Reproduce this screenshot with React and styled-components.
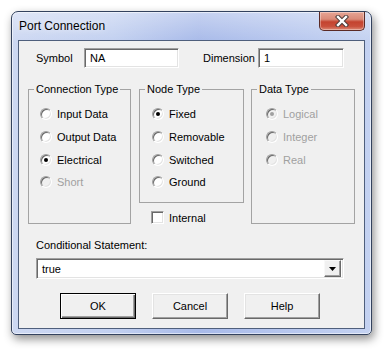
import React from 'react'
import styled, { createGlobalStyle } from 'styled-components'

const GlobalStyle = createGlobalStyle`
  html, body {
    margin: 0;
    padding: 0;
    background: #fff;
  }
  body {
    font-family: "Liberation Sans", Arial, sans-serif;
    font-size: 11px;
    color: #000;
  }
  * {
    box-sizing: border-box;
  }
`

const Desktop = styled.div`
  width: 385px;
  height: 351px;
  padding: 11px 0 0 11px;
`

const Window = styled.div`
  width: 361px;
  height: 324px;
  display: flex;
  flex-direction: column;
  border: 1px solid #33425e;
  border-radius: 7px 7px 5px 5px;
  padding: 0 6px 5px;
  background:
    linear-gradient(180deg, rgba(255, 255, 255, 0.35) 0%, rgba(255, 255, 255, 0) 30px),
    linear-gradient(90deg, #cdd8f2 0%, #c2d0f0 28%, #a8bae9 52%, #b6c6ee 76%, #c4d2f1 100%);
  box-shadow: 2px 4px 10px rgba(0, 0, 0, 0.45), inset 0 0 0 1px rgba(255, 255, 255, 0.55);
`

const TitleBar = styled.div`
  height: 28px;
  display: flex;
  align-items: center;
  padding-left: 1px;
`

const Title = styled.span`
  flex: 1;
  font-size: 12px;
  color: #000;
  text-shadow: 0 0 6px rgba(255, 255, 255, 0.9);
`

const CloseButton = styled.div`
  align-self: flex-start;
  width: 46px;
  height: 19px;
  border: 1px solid #5b2a25;
  border-top: none;
  border-radius: 0 0 5px 5px;
  background: linear-gradient(180deg, #e6a494 0%, #d98a78 40%, #c4432f 55%, #c9503c 80%, #dd8a76 100%);
  box-shadow: inset 0 0 0 1px rgba(255, 255, 255, 0.35);
  display: flex;
  align-items: center;
  justify-content: center;
`

const Client = styled.div`
  flex: 1;
  background: #f0f0f0;
  border: 1px solid #4f5f7c;
  display: flex;
  flex-direction: column;
  padding-top: 7px;
`

const FieldRow = styled.div`
  display: flex;
  align-items: center;
  height: 20px;
  padding-left: 17px;
`

const FieldLabel = styled.span`
  width: ${p => p.$w}px;
  margin-left: ${p => p.$ml || 0}px;
`

const Sunken = styled.div`
  height: ${p => p.$h || 20}px;
  width: ${p => p.$w}px;
  background: #fff;
  border: 1px solid;
  border-color: #a0a0a0 #fff #fff #a0a0a0;
  box-shadow: inset 1px 1px 0 #696969, inset -1px -1px 0 #e3e3e3;
  display: flex;
  align-items: center;
  padding-left: 5px;
`

const GroupsRow = styled.div`
  display: flex;
  align-items: flex-start;
  margin-top: 15px;
  padding-left: 9px;
`

const Column = styled.div`
  display: flex;
  flex-direction: column;
  margin-left: ${p => p.$ml || 0}px;
`

const Group = styled.fieldset`
  margin: 0;
  padding: 0;
  width: ${p => p.$w}px;
  height: ${p => p.$h}px;
  border: 1px solid #a3a3a3;
  min-inline-size: 0;
`

const Legend = styled.legend`
  margin-left: 5px;
  padding: 0 2px;
  line-height: 13px;
  white-space: nowrap;
  color: ${p => (p.$disabled ? '#a0a0a0' : '#000')};
`

const Options = styled.div`
  padding: 7px 0 0 ${p => p.$inset}px;
`

const OptionRow = styled.div`
  display: flex;
  align-items: center;
  height: 22.7px;
  white-space: nowrap;
  color: ${p => (p.$disabled ? '#a0a0a0' : '#000')};
`

const RadioDot = styled.span`
  flex: none;
  width: 12px;
  height: 12px;
  border-radius: 50%;
  border: 1px solid;
  border-color: #a0a0a0 #fff #fff #a0a0a0;
  background: ${p => (p.$disabled ? '#f0f0f0' : '#fff')};
  box-shadow: inset 1px 1px 0 #696969, inset -1px -1px 0 #e3e3e3;
  display: flex;
  align-items: center;
  justify-content: center;
  margin-right: 5px;

  &::after {
    content: '';
    width: 4px;
    height: 4px;
    border-radius: 50%;
    background: ${p => (p.$disabled ? '#a0a0a0' : '#000')};
    display: ${p => (p.$checked ? 'block' : 'none')};
  }
`

const CheckRow = styled.div`
  display: flex;
  align-items: center;
  height: 13px;
  margin-top: 8px;
  padding-left: 12px;
`

const CheckBox = styled.span`
  flex: none;
  width: 13px;
  height: 13px;
  border: 1px solid;
  border-color: #a0a0a0 #fff #fff #a0a0a0;
  background: #fff;
  box-shadow: inset 1px 1px 0 #696969, inset -1px -1px 0 #e3e3e3;
  margin-right: 5px;
`

const SectionLabel = styled.div`
  margin-top: 15px;
  padding-left: 17px;
  line-height: 13px;
`

const Combo = styled(Sunken)`
  margin: 6px 0 0 17px;
  justify-content: space-between;
  padding-right: 2px;
`

const DropButton = styled.span`
  width: 17px;
  height: 17px;
  background: #f0f0f0;
  border: 1px solid;
  border-color: #f8f8f8 #696969 #696969 #f8f8f8;
  box-shadow: inset -1px -1px 0 #a0a0a0;
  display: flex;
  align-items: center;
  justify-content: center;
`

const ButtonRow = styled.div`
  display: flex;
  gap: 16px;
  margin-top: 14px;
  padding-left: 41px;
`

const PushButton = styled.div`
  width: 76px;
  height: 26px;
  background: #f0f0f0;
  border: 1px solid;
  border-color: ${p => (p.$default ? '#000' : '#fff #696969 #696969 #fff')};
  box-shadow: ${p =>
    p.$default
      ? 'inset 1px 1px 0 #fff, inset -1px -1px 0 #696969, inset -2px -2px 0 #a0a0a0'
      : 'inset -1px -1px 0 #a0a0a0, inset 1px 1px 0 #e3e3e3'};
  display: flex;
  align-items: center;
  justify-content: center;
`

const Radio = ({ label, checked, disabled }) => (
  <OptionRow $disabled={disabled}>
    <RadioDot $checked={checked} $disabled={disabled} />
    {label}
  </OptionRow>
)

const CloseGlyph = () => (
  <svg width="14" height="12" viewBox="0 0 14 12">
    <path d="M3 2 L11 10 M11 2 L3 10" stroke="#4a3a38" strokeWidth="4.4" strokeLinecap="square" />
    <path d="M3 2 L11 10 M11 2 L3 10" stroke="#fff" strokeWidth="2.4" strokeLinecap="square" />
  </svg>
)

export default function App() {
  return (
    <Desktop>
      <GlobalStyle />
      <Window>
        <TitleBar>
          <Title>Port Connection</Title>
          <CloseButton>
            <CloseGlyph />
          </CloseButton>
        </TitleBar>
        <Client>
          <FieldRow>
            <FieldLabel $w={48}>Symbol</FieldLabel>
            <Sunken $w={95}>NA</Sunken>
            <FieldLabel $w={55} $ml={24}>Dimension</FieldLabel>
            <Sunken $w={86}>1</Sunken>
          </FieldRow>

          <GroupsRow>
            <Group $w={103} $h={141}>
              <Legend>Connection Type</Legend>
              <Options $inset={11}>
                <Radio label="Input Data" />
                <Radio label="Output Data" />
                <Radio label="Electrical" checked />
                <Radio label="Short" disabled />
              </Options>
            </Group>
            <Column $ml={8}>
              <Group $w={105} $h={120}>
                <Legend>Node Type</Legend>
                <Options $inset={12}>
                  <Radio label="Fixed" checked />
                  <Radio label="Removable" />
                  <Radio label="Switched" />
                  <Radio label="Ground" />
                </Options>
              </Group>
              <CheckRow>
                <CheckBox />
                Internal
              </CheckRow>
            </Column>
            <Column $ml={7}>
              <Group $w={104} $h={141}>
                <Legend>Data Type</Legend>
                <Options $inset={14}>
                  <Radio label="Logical" checked disabled />
                  <Radio label="Integer" disabled />
                  <Radio label="Real" disabled />
                </Options>
              </Group>
            </Column>
          </GroupsRow>

          <SectionLabel>Conditional Statement:</SectionLabel>
          <Combo $w={308} $h={21}>
            true
            <DropButton>
              <svg width="7" height="4" viewBox="0 0 7 4">
                <path d="M0 0 H7 L3.5 4 Z" fill="#000" />
              </svg>
            </DropButton>
          </Combo>

          <ButtonRow>
            <PushButton $default>OK</PushButton>
            <PushButton>Cancel</PushButton>
            <PushButton>Help</PushButton>
          </ButtonRow>
        </Client>
      </Window>
    </Desktop>
  )
}
